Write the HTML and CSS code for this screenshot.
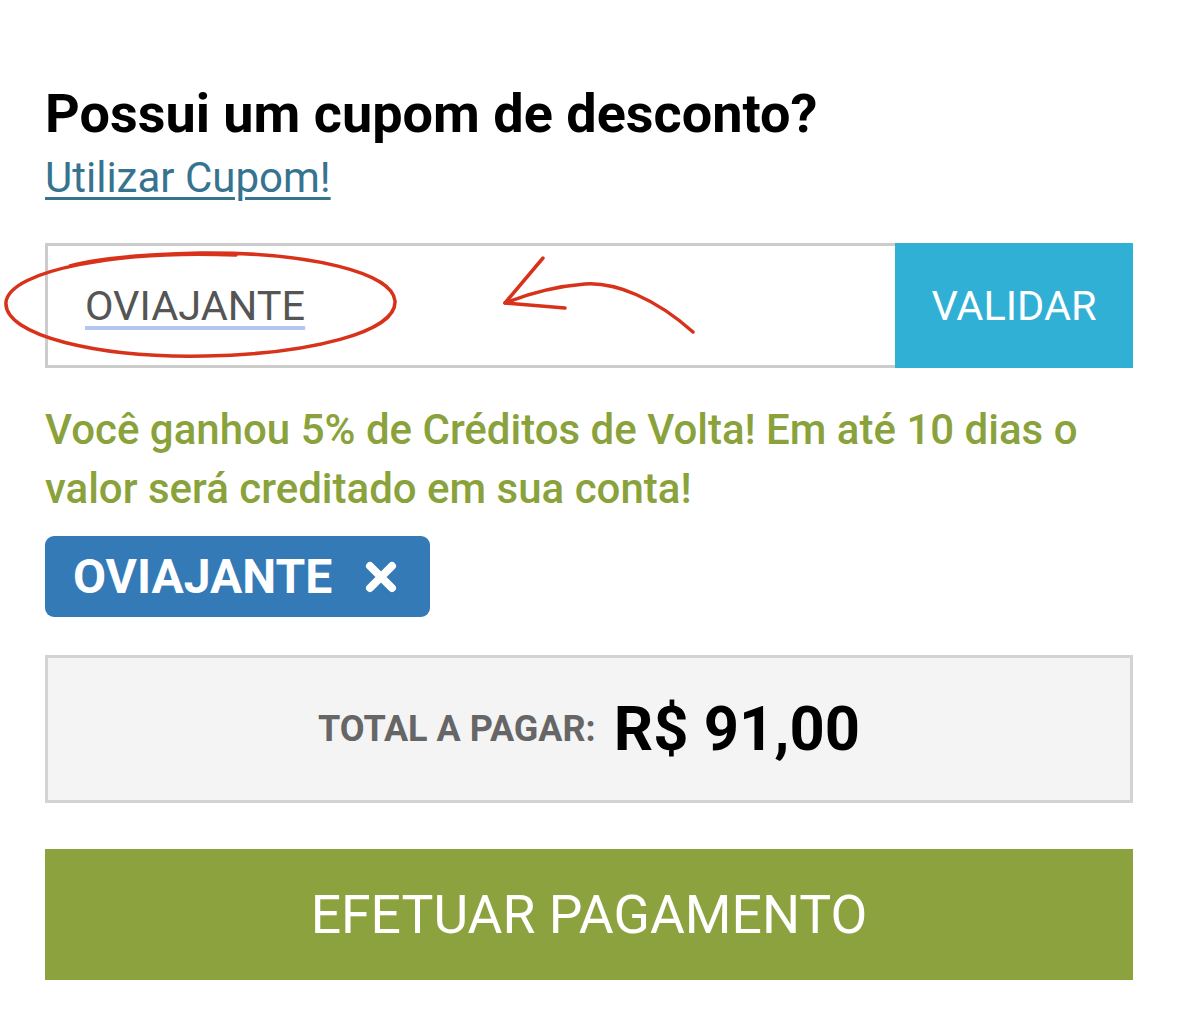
FILE: index.html
```html
<!DOCTYPE html>
<html lang="pt-BR">
<head>
<meta charset="utf-8">
<title>Cupom de desconto</title>
<link rel="stylesheet" href="styles.css">
</head>
<body>
<main class="page">
  <h1 class="title">Possui um cupom de desconto?</h1>
  <a class="use-link" href="#">Utilizar Cupom!</a>

  <div class="coupon-row">
    <div class="coupon-input"><span class="coupon-text">OVIAJANTE</span></div>
    <button class="validate-btn" type="button">VALIDAR</button>
    <svg class="annotation" viewBox="0 243 745 125" aria-hidden="true">
      <path d="M236 255 C120 250 10 270 6 302 C3 336 100 358 205 356 C310 354 397 332 395 301 C393 273 310 252 200 253 C150 254 100 258 70 266" fill="none" stroke="#d8321b" stroke-width="3.5" stroke-linecap="round"/>
      <path d="M693 332 C655 298 615 282 585 284 C560 286 530 293 505 303" fill="none" stroke="#d8321b" stroke-width="3.5" stroke-linecap="round"/>
      <path d="M543 258 L505 303 L565 308" fill="none" stroke="#d8321b" stroke-width="3.5" stroke-linecap="round" stroke-linejoin="round"/>
    </svg>
  </div>

  <p class="success-msg">Você ganhou 5% de Créditos de Volta! Em até 10 dias o valor será creditado em sua conta!</p>

  <div class="badge-wrap">
    <span class="coupon-badge">
      <span class="badge-text">OVIAJANTE</span>
      <svg class="badge-x" viewBox="0 0 34 34" aria-hidden="true">
        <path d="M6 6 L28 28 M28 6 L6 28" stroke="#fff" stroke-width="8" stroke-linecap="round"/>
      </svg>
    </span>
  </div>

  <div class="total-box">
    <span class="total-label">TOTAL A PAGAR:</span>
    <span class="total-value">R$ 91,00</span>
  </div>

  <button class="pay-btn" type="button">EFETUAR PAGAMENTO</button>
</main>
</body>
</html>
```
FILE: styles.css
```css
html, body {
  margin: 0;
  padding: 0;
  background: #ffffff;
}

body {
  font-family: Roboto, "Noto Sans", sans-serif;
}

.page {
  width: 1088px;
  padding: 84px 0 0 45px;
  display: flex;
  flex-direction: column;
  align-items: flex-start;
}

.title {
  margin: 0;
  font-size: 54px;
  line-height: 60px;
  font-weight: 700;
  color: #000;
}

.use-link {
  margin-top: 10px;
  font-size: 42px;
  line-height: 48px;
  color: #36738f;
  text-decoration: underline;
  text-decoration-thickness: 3px;
  text-underline-offset: 5px;
}

.coupon-row {
  position: relative;
  margin-top: 41px;
  width: 1088px;
  height: 125px;
  display: flex;
}

.coupon-input {
  flex: 1;
  box-sizing: border-box;
  border: 3px solid #cccccc;
  border-right: none;
  display: flex;
  align-items: center;
  padding-left: 37px;
}

.coupon-text {
  font-size: 41.5px;
  color: #555555;
  text-decoration: underline;
  text-decoration-color: #b2c8f0;
  text-decoration-thickness: 4px;
  text-underline-offset: 6px;
}

.validate-btn {
  width: 238px;
  height: 125px;
  border: none;
  margin: 0;
  padding: 0;
  background: #31b0d5;
  color: #ffffff;
  font-family: Roboto, "Noto Sans", sans-serif;
  font-size: 41.5px;
  font-weight: 400;
}

.annotation {
  position: absolute;
  left: -45px;
  top: 0;
  width: 745px;
  height: 125px;
  overflow: visible;
  pointer-events: none;
}

.success-msg {
  margin: 32px 0 0 0;
  width: 1088px;
  font-size: 42px;
  line-height: 59px;
  font-weight: 500;
  color: #8aa23c;
}

.badge-wrap {
  margin-top: 18px;
}

.coupon-badge {
  display: inline-flex;
  align-items: center;
  gap: 32px;
  height: 81px;
  box-sizing: border-box;
  padding: 0 32px 0 28px;
  background: #337ab7;
  border-radius: 9px;
}

.badge-text {
  font-size: 48px;
  font-weight: 700;
  color: #ffffff;
  line-height: 1;
}

.badge-x {
  width: 34px;
  height: 34px;
  display: block;
}

.total-box {
  margin-top: 38px;
  width: 1088px;
  height: 148px;
  box-sizing: border-box;
  border: 3px solid #d3d3d3;
  background: #f4f4f4;
  display: flex;
  align-items: center;
  justify-content: center;
  gap: 18px;
}

.total-label {
  font-size: 36px;
  font-weight: 700;
  color: #666666;
}

.total-value {
  font-size: 61.5px;
  font-weight: 700;
  color: #000000;
}

.pay-btn {
  margin-top: 46px;
  width: 1088px;
  height: 131px;
  border: none;
  padding: 0;
  background: #8ca23f;
  color: #ffffff;
  font-family: Roboto, "Noto Sans", sans-serif;
  font-size: 53.5px;
  font-weight: 400;
}
```
